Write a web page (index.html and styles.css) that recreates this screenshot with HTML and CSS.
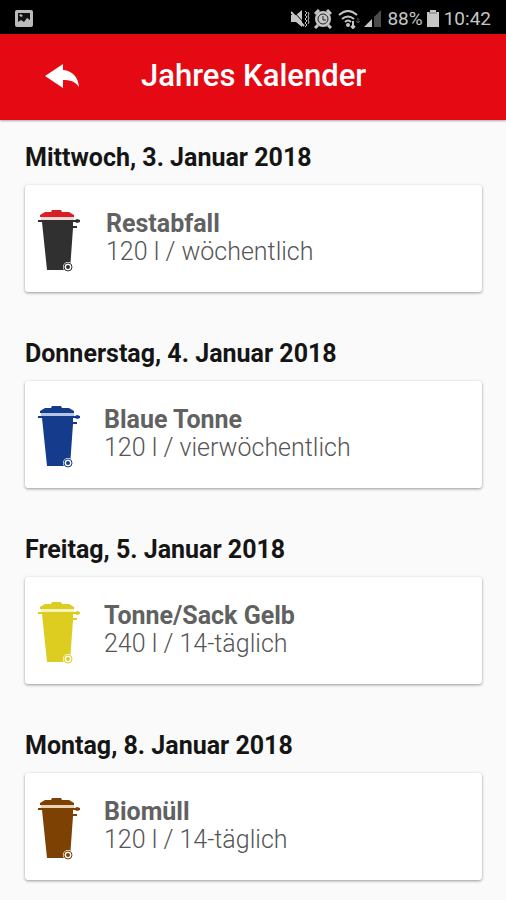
FILE: index.html
```html
<!DOCTYPE html>
<html lang="de">
<head>
<meta charset="utf-8">
<meta name="viewport" content="width=device-width, initial-scale=1">
<title>Jahres Kalender</title>
<link rel="stylesheet" href="styles.css">
</head>
<body>
<svg class="defs" aria-hidden="true">
  <symbol id="bin" viewBox="0 0 44 64">
    <path class="lid" d="M3 7V5l5-3h6l1-2h9l1 2h7l5 3v2z"/>
    <path class="rim" d="M4 7h33v3H4z"/>
    <path class="body" d="M1 10h37l2-1 3 1v2l-3 1-2-1h-2v4h4v2h-4L33 60H10L5 12H1z"/>
    <circle class="wheel" cx="31" cy="57" r="5"/>
    <circle class="ring" cx="31" cy="57" r="4"/>
    <circle class="hub" cx="31" cy="57" r="2"/>
  </symbol>
</svg>
<div class="status">
  <svg class="picture" width="18" height="18" viewBox="0 0 18 18"><rect width="18" height="17" rx="2" fill="#bbb"/><path d="M3 3h12v7l-3-2-3 4-3-2-3 2z" fill="#111"/><path d="M4 5l2-1 2 2-2 1z" fill="#bbb"/></svg>
  <svg width="19" height="20" viewBox="0 0 19 20"><path d="M0 6h5l6-5v17l-6-5H0z" fill="#c6c6c6"/><path d="M2 2l12 13" stroke="#000" stroke-width="1"/><path d="M0 3l13 14" stroke="#c6c6c6" stroke-width="2"/><path d="M14 2l2 2-2 2 2 2-2 2 2 2-2 2 2 2-2 2M17 3l1 2-1 2 1 2-1 2 1 2-1 2" fill="none" stroke="#c6c6c6" stroke-width="1"/></svg>
  <svg class="alarm" width="18" height="20" viewBox="0 0 18 20"><path d="M1 5l4-4M17 5l-4-4M4 16l-3 3M14 16l3 3" stroke="#c6c6c6" stroke-width="3"/><circle cx="9" cy="10" r="8" fill="#c6c6c6"/><circle cx="9" cy="10" r="5" fill="none" stroke="#222"/><path d="M9 7v4h3" fill="none" stroke="#222"/></svg>
  <svg class="wifi" width="23" height="20" viewBox="0 0 23 20"><g fill="none" stroke="#c6c6c6" stroke-width="2"><path d="M1 6Q10-2 19 6M4 10q6-5 12 0M7 13q3-3 6 0"/><path d="M15 12v7m-2-2 2 2 2-2"/></g><circle cx="10" cy="16" r="2" fill="#c6c6c6"/><path d="M20 9v5m-2-2 2 2 2-2" fill="none" stroke="#555"/></svg>
  <svg width="18" height="20" viewBox="0 0 18 20"><path d="M17 1v17h-7V8z" fill="#4a4a4a"/><path d="M8 10v8H0z" fill="#c6c6c6"/></svg>
  <span class="percent">88%</span>
  <svg class="battery" width="12" height="20" viewBox="0 0 12 20"><path d="M3 1h6v2h3v15H0V3h3z" fill="#c6c6c6"/><path d="M2 4h8" stroke="#777"/></svg>
  <time>10:42</time>
</div>
<header class="bar">
  <button class="back" type="button" aria-label="Zurück"><svg width="36" height="26" viewBox="0 0 36 26"><path d="M1 13 19 1v6c10 1 15 7 16 17-4-6-9-7-16-7v8z" fill="#fff"/></svg></button>
  <h1>Jahres Kalender</h1>
</header>
<main>
  <section>
    <h2>Mittwoch, 3. Januar 2018</h2>
    <article class="card rest"><svg class="bin"><use href="#bin"/></svg><div><h3>Restabfall</h3><p>120 l / wöchentlich</p></div></article>
  </section>
  <section>
    <h2>Donnerstag, 4. Januar 2018</h2>
    <article class="card blue"><svg class="bin"><use href="#bin"/></svg><div><h3>Blaue Tonne</h3><p>120 l / vierwöchentlich</p></div></article>
  </section>
  <section>
    <h2>Freitag, 5. Januar 2018</h2>
    <article class="card yellow"><svg class="bin"><use href="#bin"/></svg><div><h3>Tonne/Sack Gelb</h3><p>240 l / 14-täglich</p></div></article>
  </section>
  <section>
    <h2>Montag, 8. Januar 2018</h2>
    <article class="card brown"><svg class="bin"><use href="#bin"/></svg><div><h3>Biomüll</h3><p>120 l / 14-täglich</p></div></article>
  </section>
</main>
</body>
</html>
```
FILE: styles.css
```css
* { box-sizing: border-box; }
body { margin: 0; background: #fafafa; font-family: Roboto, "Liberation Sans", sans-serif; }
h1, h2, h3, p { margin: 0; }
.defs { position: absolute; width: 0; height: 0; }
.status { display: flex; align-items: center; height: 34px; padding: 3px 15px 0; background: #000; color: #c6c6c6; font-size: 19px; }
.picture { margin-right: auto; }
.alarm { margin-left: 4px; }
.wifi { margin: 0 3px 0 6px; }
.percent { margin-left: 5px; }
.battery { margin: 0 5px 0 4px; }
.bar { display: flex; align-items: center; height: 86px; padding: 0 44px 2px; background: #e50914; color: #fff; box-shadow: 0 1px 2px #0005; }
.back { display: flex; padding: 0; border: 0; background: none; }
.bar h1 { margin-left: 61px; font-size: 31px; line-height: 38px; font-weight: 500; }
main { display: grid; gap: 48px; padding: 24px 24px 19px 25px; }
h2 { margin-bottom: 13px; color: #151515; font-size: 25px; line-height: 28px; font-weight: 700; }
.card { display: flex; align-items: center; gap: 23px; height: 107px; padding: 0 12px 2px; border-radius: 3px; background: #fff; box-shadow: 0 1px 3px #0006; }
.bin { width: 44px; height: 64px; margin-top: 9px; }
.card h3 { color: #616161; font-size: 25px; line-height: 28px; font-weight: 700; }
.card p { color: #555; font-size: 25px; line-height: 28px; font-weight: 300; }
.card.rest { gap: 25px; }
.body { fill: var(--bin); }
.lid { fill: var(--lid, var(--bin)); }
.rim { fill: var(--rim); }
.wheel { fill: #fff; }
.ring { fill: none; stroke: var(--bin); stroke-width: 1; }
.hub { fill: var(--bin); }
.rest { --bin: #303030; --lid: #d62027; --rim: #f3d6d6; }
.blue { --bin: #143b8c; --rim: #b5c6e5; }
.yellow { --bin: #dccd20; --rim: #f8f4b8; }
.brown { --bin: #7d4104; --rim: #ead3b8; }
```
